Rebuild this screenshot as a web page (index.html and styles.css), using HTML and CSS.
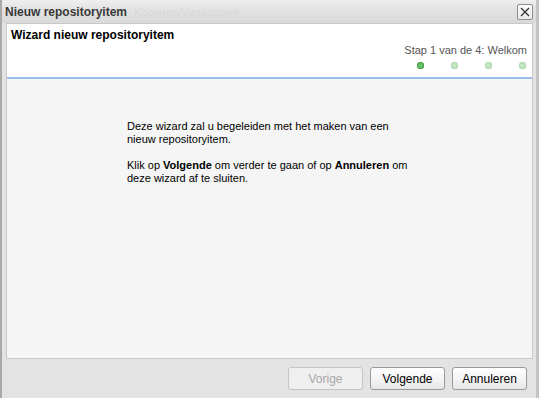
FILE: index.html
```html
<!DOCTYPE html>
<html lang="nl">
<head>
    <meta charset="UTF-8">
    <title>Nieuw repositoryitem</title>
    <link rel="stylesheet" href="styles.css">
</head>
<body>
    <div class="window">
        <div class="titlebar">
            <span class="title">Nieuw repositoryitem</span>
            <span class="ghost">Kopieren/Verplaatsen</span>
            <button class="close" title="Sluiten">
                <svg width="10" height="10" viewBox="0 0 10 10"><path d="M1 1 L9 9 M9 1 L1 9" stroke="#333" stroke-width="1.3"/></svg>
            </button>
        </div>

        <div class="panel">
            <div class="wizard-header">
                <div class="wizard-title">Wizard nieuw repositoryitem</div>
                <div class="wizard-step">Stap 1 van de 4: Welkom</div>
                <div class="steps">
                    <span class="dot active"></span>
                    <span class="dot"></span>
                    <span class="dot"></span>
                    <span class="dot"></span>
                </div>
            </div>
            <div class="wizard-body">
                <p>Deze wizard zal u begeleiden met het maken van een<br>nieuw repositoryitem.</p>
                <p>Klik op <b>Volgende</b> om verder te gaan of op <b>Annuleren</b> om<br>deze wizard af te sluiten.</p>
            </div>
        </div>

        <div class="footer">
            <button class="btn" disabled>Vorige</button>
            <button class="btn">Volgende</button>
            <button class="btn">Annuleren</button>
        </div>
    </div>
</body>
</html>
```

FILE: styles.css
```css
:root {
    --border-color: #c9c9c9;
    --toolbar-bg: #e3e3e3;
    --text-color: #000;
}

html, body {
    margin: 0;
    padding: 0;
}

body {
    font-family: Tahoma, "Liberation Sans", Arial, sans-serif;
    font-size: 11px;
    color: var(--text-color);
}

.window {
    height: 398px;
    box-sizing: border-box;
    border-left: 2px solid #a9a9a9;
    border-right: 3px solid #c4c4c4;
    background: var(--toolbar-bg);
    display: flex;
    flex-direction: column;
}

.titlebar {
    position: relative;
    height: 23px;
    padding: 0 3px 0 3px;
    display: flex;
    align-items: center;
    background: linear-gradient(#efefef 0%, #e4e4e4 35%, #d9d9d9 100%);
}

.title {
    font-weight: bold;
    font-size: 12px;
    color: #3a3a3a;
    padding-top: 1px;
}

/* faint text of the window behind */
.ghost {
    position: absolute;
    left: 132px;
    top: 6px;
    font-size: 11px;
    color: rgba(0, 0, 0, 0.07);
}

.close {
    margin-left: auto;
    margin-top: 1px;
    width: 16px;
    height: 16px;
    padding: 0;
    border: 1px solid #8e8e8e;
    border-radius: 2px;
    background: linear-gradient(#fdfdfd, #e9e9e9);
    display: flex;
    align-items: center;
    justify-content: center;
}

.panel {
    flex: 1;
    margin: 0 3px 0 4px;
    border: 1px solid var(--border-color);
    display: flex;
    flex-direction: column;
}

.wizard-header {
    height: 53px;
    background: #fff;
    border-bottom: 2px solid #99bbe8;
    padding: 0 5px 0 4px;
    display: flex;
    flex-direction: column;
}

.wizard-title {
    font-weight: bold;
    font-size: 12px;
    margin-top: 4px;
}

.wizard-step {
    align-self: flex-end;
    font-size: 11px;
    color: #555;
    margin-top: 2px;
}

.steps {
    align-self: flex-end;
    display: flex;
    gap: 27px;
    margin-top: 6px;
    margin-right: 1px;
}

.dot {
    width: 7px;
    height: 7px;
    border-radius: 50%;
    background: #c3e5c3;
    box-shadow: inset 0 0 0 1px #aad6aa;
}

.dot.active {
    background: #6cc06c;
    box-shadow: inset 0 0 0 1px #479c47;
}

.wizard-body {
    flex: 1;
    background: #f5f5f5;
    padding: 41px 0 0 120px;
}

.wizard-body p {
    margin: 0 0 13px 0;
    line-height: 13px;
    font-size: 11px;
}

.footer {
    height: 39px;
    display: flex;
    align-items: center;
    justify-content: flex-end;
    gap: 7px;
    padding-right: 9px;
}

.btn {
    width: 75px;
    height: 23px;
    font-family: inherit;
    font-size: 12px;
    color: #000;
    border: 1px solid #9a9a9a;
    border-radius: 3px;
    background: linear-gradient(#ffffff, #f2f2f2 60%, #e6e6e6);
    padding: 0;
}

.btn:disabled {
    color: #a8a8a8;
    border-color: #c6c6c6;
    background: #efefef;
}
```
